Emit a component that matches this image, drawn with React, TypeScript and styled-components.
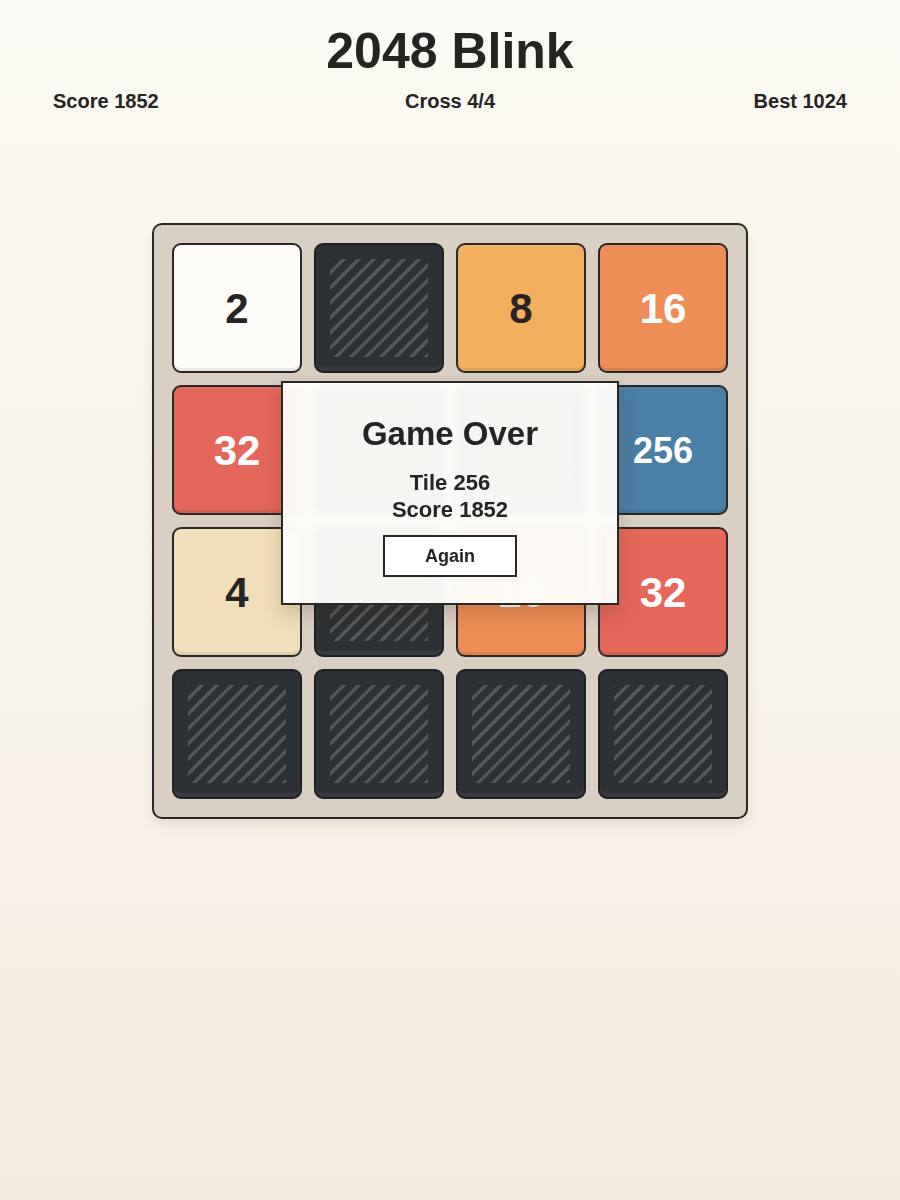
import React from "react";
import styled, { createGlobalStyle } from "styled-components";

const Global = createGlobalStyle`
  html, body { margin: 0; padding: 0; }
  body {
    min-height: 1200px;
    background: linear-gradient(180deg, #fbf9f3 0%, #f8f4ec 50%, #f3eadd 100%);
    font-family: "Liberation Sans", Arial, sans-serif;
    color: #262422;
  }
`;

const Page = styled.div`
  width: 900px;
  min-height: 1200px;
  display: flex;
  flex-direction: column;
  align-items: center;
  padding-top: 21px;
  box-sizing: border-box;
`;

const Title = styled.h1`
  margin: 0;
  font-size: 50px;
  line-height: 60px;
  font-weight: 700;
  color: #262422;
`;

const Stats = styled.div`
  width: 100%;
  box-sizing: border-box;
  padding: 0 53px;
  margin-top: 8px;
  display: grid;
  grid-template-columns: 1fr auto 1fr;
  font-size: 20px;
  line-height: 24px;
  font-weight: 700;
`;

const Stat = styled.div<{ $align: "start" | "center" | "end" }>`
  justify-self: ${(p) => p.$align};
`;

const Board = styled.div`
  position: relative;
  margin-top: 110px;
  width: 596px;
  box-sizing: border-box;
  padding: 18px;
  background: #d9cfc3;
  border: 2px solid #2a2826;
  border-radius: 10px;
  box-shadow: 0 6px 12px rgba(90, 70, 40, 0.1);
  display: grid;
  grid-template-columns: repeat(4, 130px);
  grid-auto-rows: 130px;
  gap: 12px;
`;

const palette: Record<string, { bg: string; fg: string; size: number }> = {
  "2": { bg: "#fdfcf8", fg: "#262422", size: 42 },
  "4": { bg: "#f1dfb9", fg: "#262422", size: 42 },
  "8": { bg: "#f2b05e", fg: "#262422", size: 42 },
  "16": { bg: "#ee8d55", fg: "#ffffff", size: 42 },
  "32": { bg: "#e4675a", fg: "#ffffff", size: 42 },
  "256": { bg: "#4a7fa6", fg: "#ffffff", size: 36 },
};

const Tile = styled.div<{ $bg: string; $fg: string; $size: number }>`
  box-sizing: border-box;
  border: 2px solid #2a2826;
  border-radius: 9px;
  background: ${(p) => p.$bg};
  color: ${(p) => p.$fg};
  font-size: ${(p) => p.$size}px;
  font-weight: 700;
  display: flex;
  align-items: center;
  justify-content: center;
  padding-top: 2px;
  box-shadow: inset 0 -3px 0 rgba(0, 0, 0, 0.08);
`;

const EmptyTile = styled.div`
  box-sizing: border-box;
  border: 2px solid #1f2225;
  border-radius: 9px;
  background: #2d3135;
  padding: 14px;
  display: flex;
  box-shadow: inset 0 -4px 0 rgba(255, 255, 255, 0.05);
`;

const Hatch = styled.div`
  flex: 1;
  background: repeating-linear-gradient(
    -45deg,
    #52575c 0px,
    #52575c 3.3px,
    transparent 3.3px,
    transparent 10.6px
  );
`;

const Overlay = styled.div`
  position: absolute;
  top: 156px;
  left: 50%;
  transform: translateX(-50%);
  width: 338px;
  height: 224px;
  box-sizing: border-box;
  border: 2px solid #2a2826;
  background: rgba(253, 252, 249, 0.965);
  backdrop-filter: blur(3px);
  box-shadow: 0 8px 18px rgba(60, 40, 20, 0.2);
  display: flex;
  flex-direction: column;
  align-items: center;
  padding-top: 31px;
`;

const OverTitle = styled.h2`
  margin: 0;
  font-size: 33px;
  line-height: 40px;
  font-weight: 700;
  color: #262422;
`;

const OverStats = styled.div`
  margin-top: 15px;
  font-size: 22px;
  line-height: 27px;
  font-weight: 700;
  text-align: center;
  color: #262422;
`;

const AgainButton = styled.button`
  margin-top: 12px;
  width: 134px;
  height: 42px;
  box-sizing: border-box;
  border: 2px solid #2a2826;
  border-radius: 0;
  background: #ffffff;
  font-family: "Liberation Sans", Arial, sans-serif;
  font-size: 18px;
  font-weight: 700;
  color: #262422;
  cursor: pointer;
`;

const cells: (string | null)[] = [
  "2", null, "8", "16",
  "32", null, null, "256",
  "4", null, "16", "32",
  null, null, null, null,
];

export default function App() {
  return (
    <>
      <Global />
      <Page>
        <Title>2048 Blink</Title>
        <Stats>
          <Stat $align="start">Score 1852</Stat>
          <Stat $align="center">Cross 4/4</Stat>
          <Stat $align="end">Best 1024</Stat>
        </Stats>
        <Board>
          {cells.map((v, i) =>
            v ? (
              <Tile key={i} $bg={palette[v].bg} $fg={palette[v].fg} $size={palette[v].size}>
                {v}
              </Tile>
            ) : (
              <EmptyTile key={i}>
                <Hatch />
              </EmptyTile>
            )
          )}
          <Overlay>
            <OverTitle>Game Over</OverTitle>
            <OverStats>
              Tile 256
              <br />
              Score 1852
            </OverStats>
            <AgainButton>Again</AgainButton>
          </Overlay>
        </Board>
      </Page>
    </>
  );
}
